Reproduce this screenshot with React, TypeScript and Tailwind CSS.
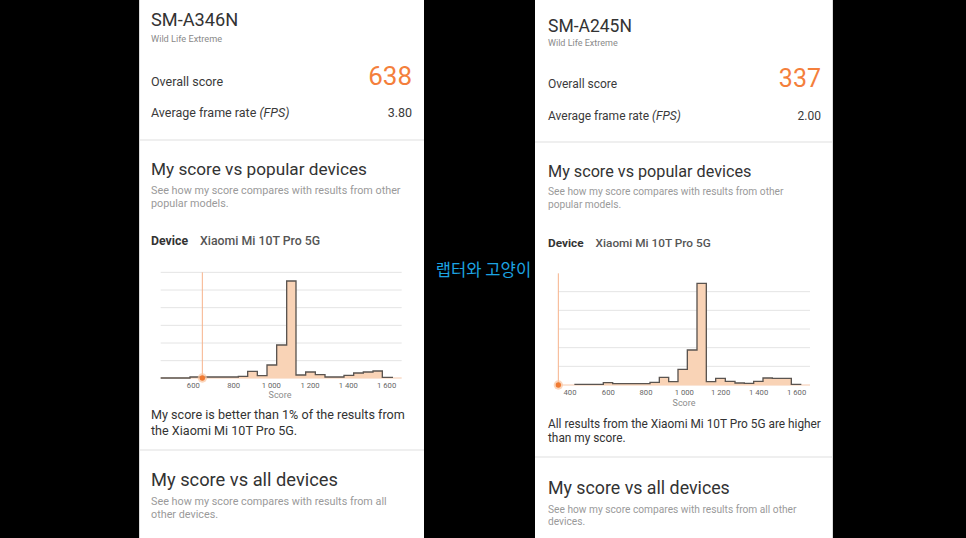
import React from "react";

type Bin = [number, number];

type ChartSpec = {
  viewBox: string;
  width: number;
  height: number;
  grid: number[];
  gridX: [number, number];
  base: number;
  baseFrom: number;
  bins: Bin[];
  markerX: number;
  markerTop: number;
  labels: [string, number][];
  labelY: number;
  labelSize: number;
  scoreX: number;
  scoreY: number;
  scoreSize: number;
};

type Variant = {
  pad: string;
  title: string;
  sub: string;
  scoreRow: string;
  label: string;
  score: string;
  fpsRow: string;
  top: string;
  heading: string;
  desc: string;
  device: string;
  chart: string;
  result: string;
  mid: string;
  bottom: string;
  bottomHeading: string;
  bottomDesc: string;
};

const histPath = (bins: Bin[], base: number, closed: boolean) => {
  let d = `M ${bins[0][0]} ${base} V ${bins[0][1]}`;
  for (let i = 1; i < bins.length; i++) {
    d += ` H ${bins[i][0]} V ${bins[i][1]}`;
  }
  if (closed) d += ` V ${base} Z`;
  return d;
};

const Histogram = ({ c }: { c: ChartSpec }) => (
  <svg width={c.width} height={c.height} viewBox={c.viewBox} className="block">
    {c.grid.map((y) => (
      <line key={y} x1={c.gridX[0]} x2={c.gridX[1]} y1={y} y2={y} stroke="#e4e4e4" strokeWidth="3" />
    ))}
    <line x1={c.baseFrom} x2={c.gridX[1]} y1={c.base} y2={c.base} stroke="#f6c9ac" strokeWidth="3" />
    <path d={histPath(c.bins, c.base, true)} fill="#f9d3b6" stroke="none" />
    <path d={histPath(c.bins, c.base, false)} fill="none" stroke="#5a5450" strokeWidth="4" />
    <line x1={c.markerX} x2={c.markerX} y1={c.markerTop} y2={c.base} stroke="#f7b38b" strokeWidth="3" />
    <circle cx={c.markerX} cy={c.base} r="14" fill="#f9c4a0" opacity="0.7" />
    <circle cx={c.markerX} cy={c.base} r="8" fill="#f07a32" />
    {c.labels.map(([t, x]) => (
      <text
        key={t}
        x={x}
        y={c.labelY}
        textAnchor="middle"
        fontSize={c.labelSize}
        fill="#666"
        fontFamily="Roboto, sans-serif"
      >
        {t}
      </text>
    ))}
    <text
      x={c.scoreX}
      y={c.scoreY}
      textAnchor="middle"
      fontSize={c.scoreSize}
      fill="#8c8c8c"
      fontFamily="Roboto, sans-serif"
    >
      Score
    </text>
  </svg>
);

type PanelProps = {
  model: string;
  score: string;
  fps: string;
  result: string[];
  allDesc: string[];
  chart: ChartSpec;
  v: Variant;
  className: string;
};

const Panel = ({ model, score, fps, result, allDesc, chart, v, className }: PanelProps) => (
  <div className={`bg-white h-full flex flex-col text-[#3a3a3a] ${className}`}>
    <div className={`${v.pad} ${v.top} border-b-2 border-[#efefef]`}>
      <div className={v.title}>{model}</div>
      <div className={v.sub}>Wild Life Extreme</div>
      <div className={`flex justify-between items-end ${v.scoreRow}`}>
        <span className={v.label}>Overall score</span>
        <span className={v.score}>{score}</span>
      </div>
      <div className={`flex justify-between ${v.fpsRow}`}>
        <span>
          Average frame rate <i>(FPS)</i>
        </span>
        <span>{fps}</span>
      </div>
    </div>

    <div className={`${v.pad} ${v.mid} border-b-2 border-[#efefef]`}>
      <div className={v.heading}>My score vs popular devices</div>
      <div className={`whitespace-nowrap ${v.desc}`}>
        See how my score compares with results from other
        <br />
        popular models.
      </div>
      <div className={`flex ${v.device}`}>
        <span className="font-bold text-[#333]">Device</span>
        <span className="font-medium text-[#555] ml-[12px]">Xiaomi Mi 10T Pro 5G</span>
      </div>
      <div className={v.chart}>
        <Histogram c={chart} />
      </div>
      <div className={`whitespace-nowrap ${v.result}`}>
        {result[0]}
        <br />
        {result[1]}
      </div>
    </div>

    <div className={`${v.pad} ${v.bottom}`}>
      <div className={v.bottomHeading}>My score vs all devices</div>
      <div className={`whitespace-nowrap ${v.bottomDesc}`}>
        {allDesc[0]}
        <br />
        {allDesc[1]}
      </div>
    </div>
  </div>
);

const leftChart: ChartSpec = {
  viewBox: "33 0 783 441",
  width: 261,
  height: 147,
  grid: [37, 90, 143, 196, 249, 302],
  gridX: [62, 785],
  base: 354,
  baseFrom: 62,
  bins: [
    [62, 354], [150, 351], [295, 349], [323, 334], [352, 347], [381, 315],
    [410, 255], [440, 63], [468, 345], [497, 336], [526, 344], [555, 351],
    [612, 346], [641, 339], [670, 336], [699, 333], [727, 352], [757, 354],
  ],
  markerX: 187,
  markerTop: 37,
  labels: [["600", 160], ["800", 281], ["1 000", 394], ["1 200", 510], ["1 400", 625], ["1 600", 740]],
  labelY: 385,
  labelSize: 23,
  scoreX: 420,
  scoreY: 413,
  scoreSize: 27,
};

const rightChart: ChartSpec = {
  viewBox: "24 0 819 471",
  width: 273,
  height: 157,
  grid: [95, 151, 207, 263, 319],
  gridX: [55, 810],
  base: 375,
  baseFrom: 55,
  bins: [
    [105, 373], [190, 368], [218, 371], [330, 367], [358, 352], [386, 365],
    [414, 328], [442, 270], [471, 70], [499, 365], [527, 355], [556, 364],
    [585, 369], [613, 370], [641, 364], [669, 354], [697, 355], [754, 373], [782, 375],
  ],
  markerX: 55,
  markerTop: 40,
  labels: [["400", 90], ["600", 205], ["800", 318], ["1 000", 433], ["1 200", 542], ["1 400", 656], ["1 600", 770]],
  labelY: 406,
  labelSize: 23,
  scoreX: 432,
  scoreY: 437,
  scoreSize: 27,
};

const leftV: Variant = {
  pad: "pl-[11px] pr-[12px]",
  title: "text-[18.2px] leading-[22px] text-[#333]",
  sub: "text-[9.2px] leading-[12px] text-[#8a8a8a] mt-[2px]",
  scoreRow: "mt-[16px]",
  label: "text-[12.5px] leading-[16px] mb-[1px]",
  score: "text-[26px] leading-[30px] text-[#f47f3c]",
  fpsRow: "mt-[14px] text-[12.5px] leading-[16px]",
  top: "pt-[9px] pb-[18px]",
  heading: "text-[17.2px] leading-[22px] text-[#333]",
  desc: "mt-[4px] text-[10.8px] leading-[13px] text-[#9a9a9a]",
  device: "mt-[23px] text-[12.3px] leading-[16px]",
  chart: "mt-[11px]",
  result: "text-[12.6px] leading-[16px] text-[#333] pb-[10px]",
  mid: "pt-[17px]",
  bottom: "pt-[18px]",
  bottomHeading: "text-[18.3px] leading-[22px] text-[#333]",
  bottomDesc: "mt-[4px] text-[10.8px] leading-[13px] text-[#9a9a9a]",
};

const rightV: Variant = {
  pad: "pl-[13px] pr-[11px]",
  title: "text-[17.5px] leading-[22px] text-[#333]",
  sub: "text-[9px] leading-[12px] text-[#8a8a8a]",
  scoreRow: "mt-[15px]",
  label: "text-[12px] leading-[16px] mb-[2px]",
  score: "text-[25px] leading-[30px] text-[#f47f3c]",
  fpsRow: "mt-[14px] text-[12px] leading-[16px]",
  top: "pt-[15px] pb-[17px]",
  heading: "text-[16.2px] leading-[22px] text-[#333]",
  desc: "mt-[2px] text-[10.2px] leading-[13px] text-[#9a9a9a]",
  device: "mt-[24px] text-[11.8px] leading-[16px]",
  chart: "mt-[9px]",
  result: "text-[11.85px] leading-[14px] text-[#333] pb-[11px]",
  mid: "pt-[18px]",
  bottom: "pt-[19px]",
  bottomHeading: "text-[17.8px] leading-[22px] text-[#333]",
  bottomDesc: "mt-[5px] text-[10.2px] leading-[12px] text-[#9a9a9a]",
};

export default function App() {
  return (
    <div className="w-[966px] h-[538px] bg-black flex overflow-hidden font-['Roboto','Liberation_Sans',sans-serif]">
      <div className="w-[139px]" />
      <Panel
        className="w-[285px] border-l border-[#dcdcdc]"
        model="SM-A346N"
        score="638"
        fps="3.80"
        result={["My score is better than 1% of the results from", "the Xiaomi Mi 10T Pro 5G."]}
        allDesc={["See how my score compares with results from all", "other devices."]}
        chart={leftChart}
        v={leftV}
      />
      <div className="w-[111px] flex items-center justify-center pl-[8px] pt-[1px]">
        <span className="text-[16.6px] text-[#1ca4e2] font-['Noto_Sans_CJK_KR',sans-serif] whitespace-nowrap">
          랩터와 고양이
        </span>
      </div>
      <Panel
        className="w-[298px] border-r border-[#dcdcdc]"
        model="SM-A245N"
        score="337"
        fps="2.00"
        result={["All results from the Xiaomi Mi 10T Pro 5G are higher", "than my score."]}
        allDesc={["See how my score compares with results from all other", "devices."]}
        chart={rightChart}
        v={rightV}
      />
    </div>
  );
}
